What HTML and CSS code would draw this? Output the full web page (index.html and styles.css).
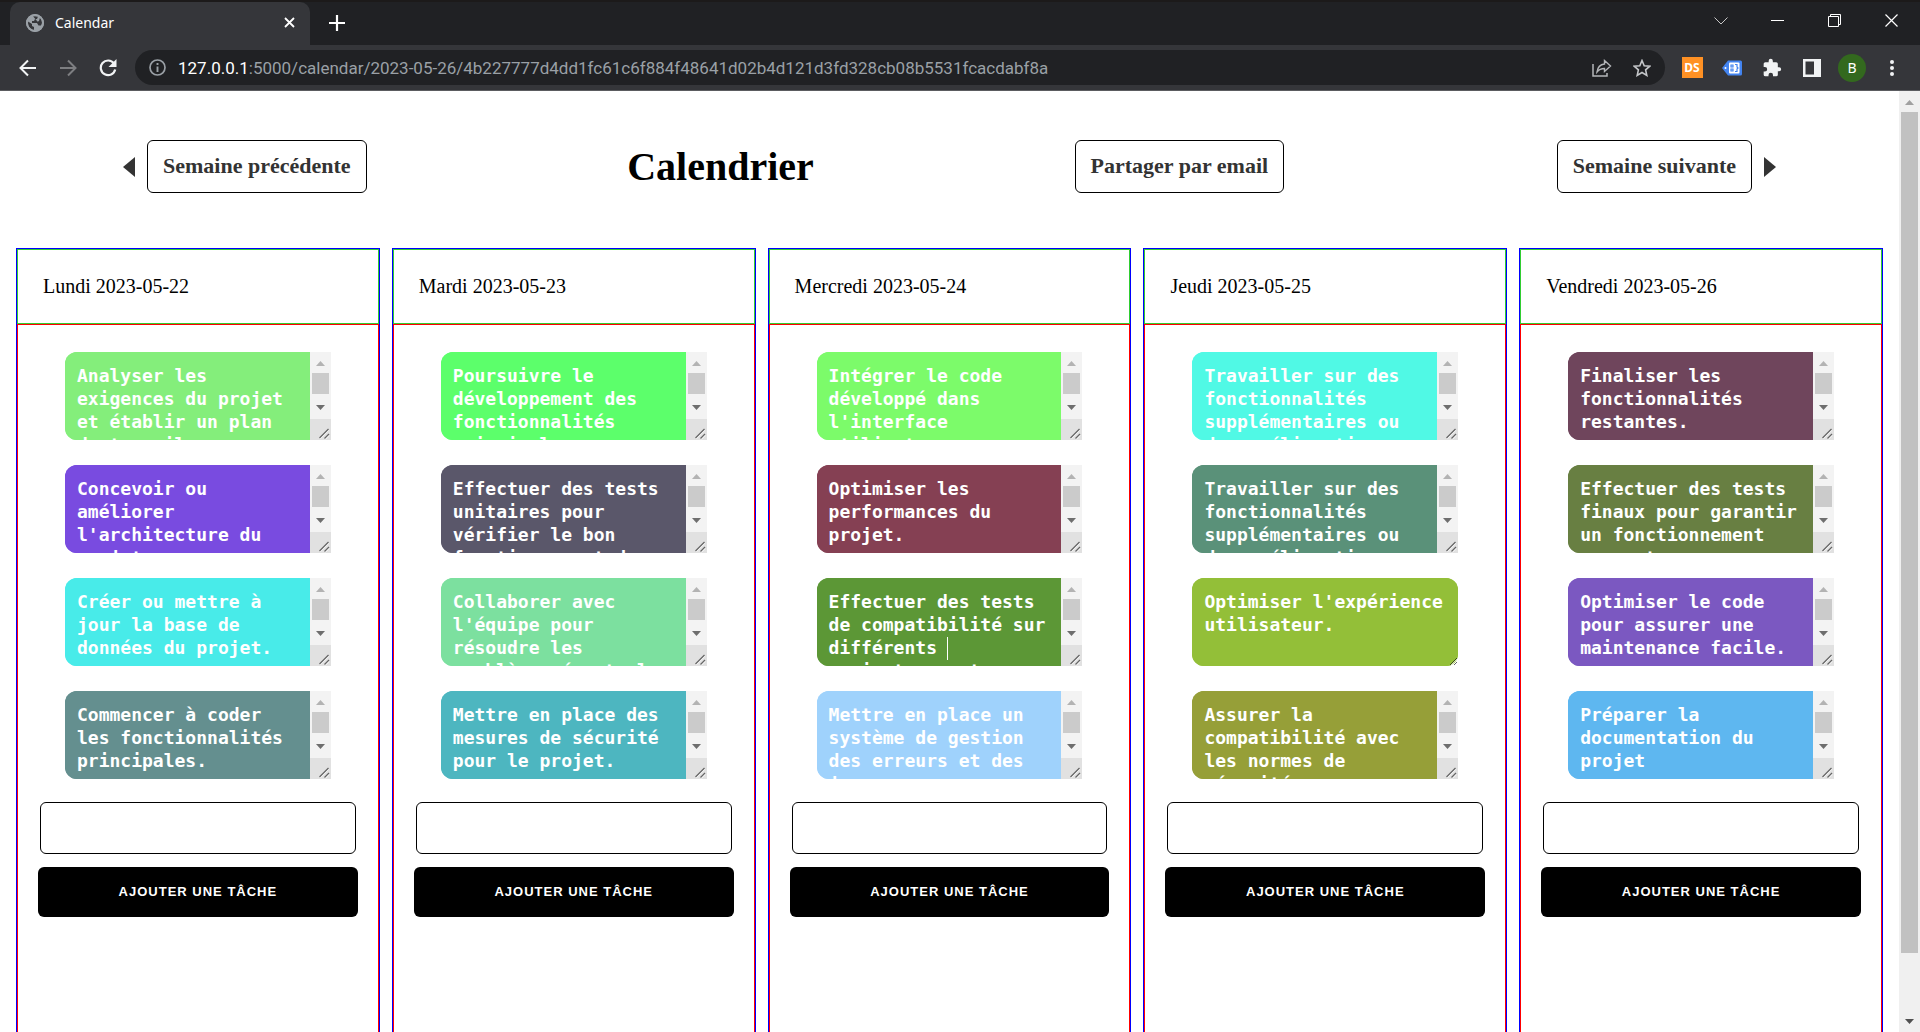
FILE: index.html
```html
<!DOCTYPE html>
<html lang="fr">
<head>
<meta charset="utf-8">
<title>Calendar</title>
<link rel="stylesheet" href="styles.css">
</head>
<body>
<svg class="defs" aria-hidden="true">
  <symbol id="bar" viewBox="0 0 21 88">
    <rect width="21" height="67" fill="#f3f3f3"/>
    <rect y="67" width="21" height="21" fill="#e1e1e1"/>
    <path d="M6 14h9L10.5 9z" fill="#b3b3b3"/>
    <rect x="2" y="21" width="17" height="21" fill="#cbcbcb"/>
    <path d="M6 53h9l-4.500 5z" fill="#6e6e6e"/>
    <path d="M10 86.500L18.500 78M15 87l4-4" stroke="#fff" stroke-width="1.500" fill="none"/>
    <path d="M9.500 86L18.500 77M14.500 86.500L19 82" stroke="#666" stroke-width="1.300" fill="none"/>
  </symbol>
</svg>

<header class="browser">
  <div class="tabs">
    <div class="tab">
      <svg width="18" height="18" viewBox="0 0 18 18"><circle cx="9" cy="9" r="9" fill="#9aa0a6"/><path d="M2 7.500l4 2.500v2l2 1v3C4 15.500 1.500 12 2 7.500zM7 2.200l5 .3-1 2.500H9L8 7H6v2h5l1.500 2.500H15c2-3 1-6-1-8l-1 3.500-2 1 1 1.500 2 1" fill="#35363a"/><circle cx="9" cy="9" r="8" fill="none" stroke="#9aa0a6" stroke-width="2"/></svg>
      <span class="tab-title">Calendar</span>
      <button class="plain" aria-label="Fermer l'onglet"><svg width="11" height="11" viewBox="0 0 11 11"><path d="M1 1l9 9M10 1l-9 9" stroke="#fff" stroke-width="1.800"/></svg></button>
    </div>
    <button class="plain new-tab" aria-label="Nouvel onglet"><svg width="16" height="16" viewBox="0 0 16 16"><path d="M8 0v16M0 8h16" stroke="#fff" stroke-width="2.200"/></svg></button>
    <div class="window-controls">
      <button class="plain" aria-label="Rechercher des onglets"><svg width="14" height="8" viewBox="0 0 14 8"><path d="M.5 .5L7 7l6.500-6.500" stroke="#c8c8c8" fill="none"/></svg></button>
      <button class="plain" aria-label="Réduire"><svg width="13" height="13" viewBox="0 0 13 13"><path d="M0 6.500h13" stroke="#fff"/></svg></button>
      <button class="plain" aria-label="Restaurer"><svg width="13" height="13" viewBox="0 0 13 13"><path d="M.5 2.500h10v10H.5zM2.500 2.500v-2h10v10h-2" stroke="#fff" fill="none"/></svg></button>
      <button class="plain" aria-label="Fermer"><svg width="13" height="13" viewBox="0 0 13 13"><path d="M.5 .5l12 12M12.500 .5l-12 12" stroke="#fff" stroke-width="1.200"/></svg></button>
    </div>
  </div>
  <div class="toolbar">
    <button class="plain tool" aria-label="Retour"><svg width="18" height="18" viewBox="0 0 18 18"><path d="M17 9H2M9 1.500L1.500 9 9 16.500" stroke="#f1f3f4" stroke-width="2" fill="none"/></svg></button>
    <button class="plain tool" aria-label="Avancer"><svg width="18" height="18" viewBox="0 0 18 18"><path d="M1 9h15M9 1.500L16.500 9 9 16.500" stroke="#7d7e81" stroke-width="2" fill="none"/></svg></button>
    <button class="plain tool" aria-label="Actualiser"><svg width="18" height="18" viewBox="0 0 18 18"><path d="M15 4.500A7.300 7.300 0 1 0 16.200 10.500" stroke="#f1f3f4" stroke-width="2.200" fill="none"/><path d="M17.500 0v8h-8z" fill="#f1f3f4"/></svg></button>
    <div class="omnibox">
      <svg class="info" width="17" height="17" viewBox="0 0 17 17"><circle cx="8.500" cy="8.500" r="7.500" fill="none" stroke="#9aa0a6" stroke-width="1.700"/><path d="M8.500 4v2M8.500 7.500v5.500" stroke="#9aa0a6" stroke-width="1.900"/></svg>
      <div class="url" role="textbox" aria-label="Adresse"><span class="host">127.0.0.1</span>:5000/calendar/2023-05-26/4b227777d4dd1fc61c6f884f48641d02b4d121d3fd328cb08b5531fcacdabf8a</div>
      <button class="plain tool" aria-label="Partager"><svg width="20" height="18" viewBox="0 0 20 18"><path d="M1 5v12h14v-3" stroke="#b4b6b9" stroke-width="1.500" fill="none"/><path d="M12.500 1.500L18.500 7l-6 5.500V9.500C9 9.500 7 10.500 5 13c.5-4 3-7.500 7.500-8z" stroke="#b4b6b9" stroke-width="1.400" fill="none"/></svg></button>
      <button class="plain tool" aria-label="Ajouter aux favoris"><svg width="18" height="18" viewBox="0 0 18 18"><path d="M9 1.500l2.200 5.200 5.600.5-4.200 3.700 1.200 5.500L9 13.500l-4.800 2.900 1.200-5.500L1.200 7.200l5.600-.5z" stroke="#c4c6c9" stroke-width="1.600" fill="none"/></svg></button>
    </div>
    <button class="plain tool"><span class="ds">DS</span></button>
    <button class="plain tool" aria-label="Extension"><svg width="20" height="16" viewBox="0 0 20 16"><path d="M6 .5h12.500q1.500 0 1.500 1.500v12q0 1.500-1.500 1.500H6L0 8z" fill="#4384f0"/><rect x="7" y="2.500" width="10.500" height="11" rx="1" fill="#fff"/><path d="M9 5h2v2H9zM9 9h2v2H9zM13 4.500h2V7l1 1-1 1v2.500h-2" fill="none" stroke="#4384f0" stroke-width="1.200"/><circle cx="3.500" cy="8" r="1" fill="#fff"/></svg></button>
    <button class="plain tool" aria-label="Extensions"><svg width="20" height="20" viewBox="0 0 24 24"><path d="M20.500 11H19V7a2 2 0 0 0-2-2h-4V3.500a2.500 2.500 0 0 0-5 0V5H4a2 2 0 0 0-2 2v3.800h1.500a2.700 2.700 0 0 1 0 5.400H2V20a2 2 0 0 0 2 2h3.800v-1.500a2.700 2.700 0 0 1 5.400 0V22H17a2 2 0 0 0 2-2v-4h1.500a2.500 2.500 0 0 0 0-5z" fill="#f1f3f4"/></svg></button>
    <button class="plain tool" aria-label="Panneau latéral"><svg width="18" height="18" viewBox="0 0 18 18"><path d="M0 0h18v18H0zM2.500 2.500v13H11v-13z" fill="#f1f3f4" fill-rule="evenodd"/></svg></button>
    <button class="plain tool"><span class="avatar">B</span></button>
    <button class="plain tool" aria-label="Menu"><svg width="4" height="16" viewBox="0 0 4 16"><circle cx="2" cy="2" r="2" fill="#f1f3f4"/><circle cx="2" cy="8" r="2" fill="#f1f3f4"/><circle cx="2" cy="14" r="2" fill="#f1f3f4"/></svg></button>
  </div>
</header>

<div class="viewport">
<main class="page">
  <nav class="week-nav">
    <div class="nav-group"><svg width="12" height="20" viewBox="0 0 12 20"><path d="M12 0v20L0 10z" fill="#333"/></svg><a class="box" href="#prev">Semaine précédente</a></div>
    <h1>Calendrier</h1>
    <a class="box" href="#share">Partager par email</a>
    <div class="nav-group next"><a class="box" href="#next">Semaine suivante</a><svg width="12" height="20" viewBox="0 0 12 20"><path d="M0 0v20l12-10z" fill="#333"/></svg></div>
  </nav>

  <div class="week">
    <section class="day">
      <h2>Lundi 2023-05-22</h2>
      <div class="day-body">
        <div class="tasks">
          <div class="task c1"><textarea aria-label="Tâche 1">Analyser les exigences du projet et établir un plan de travail.</textarea><svg class="bar"><use href="#bar"/></svg></div>
          <div class="task c2"><textarea aria-label="Tâche 2">Concevoir ou améliorer l'architecture du projet.</textarea><svg class="bar"><use href="#bar"/></svg></div>
          <div class="task c3"><textarea aria-label="Tâche 3">Créer ou mettre à jour la base de données du projet.</textarea><svg class="bar"><use href="#bar"/></svg></div>
          <div class="task c4"><textarea aria-label="Tâche 4">Commencer à coder les fonctionnalités principales.</textarea><svg class="bar"><use href="#bar"/></svg></div>
        </div>
        <input class="new-task" type="text" aria-label="Nouvelle tâche du lundi">
        <button class="add">AJOUTER UNE TÂCHE</button>
      </div>
    </section>
    <section class="day">
      <h2>Mardi 2023-05-23</h2>
      <div class="day-body">
        <div class="tasks">
          <div class="task c5"><textarea aria-label="Tâche 1">Poursuivre le développement des fonctionnalités principales.</textarea><svg class="bar"><use href="#bar"/></svg></div>
          <div class="task c6"><textarea aria-label="Tâche 2">Effectuer des tests unitaires pour vérifier le bon fonctionnement des modules.</textarea><svg class="bar"><use href="#bar"/></svg></div>
          <div class="task c7"><textarea aria-label="Tâche 3">Collaborer avec l'équipe pour résoudre les problèmes éventuels.</textarea><svg class="bar"><use href="#bar"/></svg></div>
          <div class="task c8"><textarea aria-label="Tâche 4">Mettre en place des mesures de sécurité pour le projet.</textarea><svg class="bar"><use href="#bar"/></svg></div>
        </div>
        <input class="new-task" type="text" aria-label="Nouvelle tâche du mardi">
        <button class="add">AJOUTER UNE TÂCHE</button>
      </div>
    </section>
    <section class="day">
      <h2>Mercredi 2023-05-24</h2>
      <div class="day-body">
        <div class="tasks">
          <div class="task c9"><textarea aria-label="Tâche 1">Intégrer le code développé dans l'interface utilisateur.</textarea><svg class="bar"><use href="#bar"/></svg></div>
          <div class="task c10"><textarea aria-label="Tâche 2">Optimiser les performances du projet.</textarea><svg class="bar"><use href="#bar"/></svg></div>
          <div class="task c11"><textarea aria-label="Tâche 3">Effectuer des tests de compatibilité sur différents 
navigateurs et appareils.</textarea><span class="caret"></span><svg class="bar"><use href="#bar"/></svg></div>
          <div class="task c12"><textarea aria-label="Tâche 4">Mettre en place un système de gestion des erreurs et des journaux.</textarea><svg class="bar"><use href="#bar"/></svg></div>
        </div>
        <input class="new-task" type="text" aria-label="Nouvelle tâche du mercredi">
        <button class="add">AJOUTER UNE TÂCHE</button>
      </div>
    </section>
    <section class="day">
      <h2>Jeudi 2023-05-25</h2>
      <div class="day-body">
        <div class="tasks">
          <div class="task c13"><textarea aria-label="Tâche 1">Travailler sur des fonctionnalités supplémentaires ou des améliorations.</textarea><svg class="bar"><use href="#bar"/></svg></div>
          <div class="task c14"><textarea aria-label="Tâche 2">Travailler sur des fonctionnalités supplémentaires ou des améliorations.</textarea><svg class="bar"><use href="#bar"/></svg></div>
          <div class="task short c15"><textarea aria-label="Tâche 3">Optimiser l'expérience utilisateur.</textarea></div>
          <div class="task c16"><textarea aria-label="Tâche 4">Assurer la compatibilité avec les normes de sécurité.</textarea><svg class="bar"><use href="#bar"/></svg></div>
        </div>
        <input class="new-task" type="text" aria-label="Nouvelle tâche du jeudi">
        <button class="add">AJOUTER UNE TÂCHE</button>
      </div>
    </section>
    <section class="day">
      <h2>Vendredi 2023-05-26</h2>
      <div class="day-body">
        <div class="tasks">
          <div class="task c17"><textarea aria-label="Tâche 1">Finaliser les fonctionnalités restantes.</textarea><svg class="bar"><use href="#bar"/></svg></div>
          <div class="task c18"><textarea aria-label="Tâche 2">Effectuer des tests finaux pour garantir un fonctionnement correct.</textarea><svg class="bar"><use href="#bar"/></svg></div>
          <div class="task c19"><textarea aria-label="Tâche 3">Optimiser le code pour assurer une maintenance facile.</textarea><svg class="bar"><use href="#bar"/></svg></div>
          <div class="task c20"><textarea aria-label="Tâche 4">Préparer la documentation du projet</textarea><svg class="bar"><use href="#bar"/></svg></div>
        </div>
        <input class="new-task" type="text" aria-label="Nouvelle tâche du vendredi">
        <button class="add">AJOUTER UNE TÂCHE</button>
      </div>
    </section>
  </div>
</main>
<div class="page-scroll" aria-hidden="true">
  <svg width="21" height="21" viewBox="0 0 21 21"><path d="M6 14h9l-4.500-5z" fill="#a0a0a0"/></svg>
  <div class="track"><div class="thumb"></div></div>
  <svg width="21" height="21" viewBox="0 0 21 21"><path d="M6 8h9l-4.500 5z" fill="#505050"/></svg>
</div>
</div>
</body>
</html>
```
FILE: styles.css
```css
* { box-sizing: border-box; }

body {
  margin: 0;
  height: 100vh;
  display: flex;
  flex-direction: column;
  overflow: hidden;
  background: #fff;
  font-family: "Liberation Serif", "Times New Roman", serif;
  font-size: 20px;
  color: #000;
}

svg { display: block; flex: none; }
.defs { position: absolute; width: 0; height: 0; }

/* browser frame */
.browser {
  flex: none;
  background: #202124;
  font-family: "Noto Sans", "Open Sans", sans-serif;
  color: #fff;
}
.tabs {
  height: 45px;
  display: flex;
  align-items: stretch;
  padding-left: 10px;
  border-top: 2px solid #1c1a1a;
}
.tab {
  width: 300px;
  display: flex;
  align-items: center;
  padding: 0 15px 2px 16px;
  background: #35363a;
  border-radius: 10px 10px 0 0;
}
.tab-title { flex: 1; margin-left: 11px; font-size: 14px; }
.plain {
  display: flex;
  align-items: center;
  justify-content: center;
  border: 0;
  padding: 0;
  background: none;
  color: inherit;
  font-family: inherit;
}
.new-tab { width: 54px; padding-bottom: 2px; }
.window-controls { margin-left: auto; display: flex; }
.window-controls .plain { width: 57px; padding-bottom: 6px; }

.toolbar {
  height: 46px;
  display: flex;
  align-items: center;
  padding: 0 8px;
  background: #35363a;
  border-bottom: 1px solid #5b5c60;
}
.tool { width: 40px; height: 34px; }
.omnibox {
  flex: 1;
  height: 35px;
  min-width: 0;
  display: flex;
  align-items: center;
  margin: 0 7px;
  padding: 0 3px 0 14px;
  border-radius: 18px;
  background: #202124;
}
.url {
  flex: 1;
  min-width: 0;
  margin-left: 12px;
  overflow: hidden;
  white-space: nowrap;
  font-family: Roboto, "Noto Sans", sans-serif;
  font-size: 17px;
  color: #9aa0a6;
}
.host { color: #fff; }
.ds {
  width: 21px;
  height: 21px;
  background: #ff9124;
  font-size: 12px;
  font-weight: 700;
  line-height: 21px;
}
.avatar {
  width: 28px;
  height: 28px;
  border-radius: 50%;
  background: #33691e;
  font-size: 14px;
  line-height: 28px;
}

/* page */
.viewport { flex: 1; min-height: 0; display: flex; }
.page {
  flex: 1;
  min-width: 0;
  display: flex;
  flex-direction: column;
  overflow: hidden;
}
.week-nav {
  display: flex;
  justify-content: space-between;
  align-items: center;
  padding: 49px 123px 55px;
}
.nav-group { display: flex; align-items: center; gap: 12px; }
.nav-group.next { padding-left: 12px; }
.box {
  padding: 0 15px 2px;
  border: 1px solid #000;
  border-radius: 6px;
  font-size: 22px;
  font-weight: 700;
  line-height: 49px;
  color: #333;
  text-decoration: none;
  white-space: nowrap;
}
h1 { margin: 0; font-size: 40px; line-height: 53px; }

.week {
  flex: 1;
  display: grid;
  grid-template-columns: repeat(5, 1fr);
  gap: 12px;
  padding: 0 16px;
}
.day {
  display: flex;
  flex-direction: column;
  border: 1px solid #00f;
  border-bottom: 0;
}
.day h2 {
  margin: 0;
  padding: 0 25px;
  border: 1px solid #32cd32;
  font-size: 20px;
  font-weight: 400;
  line-height: 73px;
}
.day-body {
  flex: 1;
  display: flex;
  flex-direction: column;
  padding: 27px 20px 0;
  border: 1px solid #f00;
  border-bottom: 0;
}
.tasks {
  display: flex;
  flex-direction: column;
  gap: 25px;
  padding: 0 27px;
}
.task {
  position: relative;
  display: flex;
  height: 88px;
  border-radius: 12px 0 0 12px;
}
.task textarea {
  flex: 1;
  min-width: 0;
  margin: 0;
  padding: 12px;
  border: 0;
  border-radius: 12px 0 0 12px;
  outline: 0;
  resize: none;
  overflow: hidden;
  background: inherit;
  color: #fff;
  font-family: "DejaVu Sans Mono", monospace;
  font-size: 18px;
  font-weight: 700;
  line-height: 23px;
}
.task.short, .task.short textarea { border-radius: 12px; }
.task.short textarea { resize: both; }
.bar { width: 21px; height: 88px; }
.caret {
  position: absolute;
  left: 130px;
  top: 59px;
  width: 1px;
  height: 23px;
  background: #fff;
}
.new-task {
  height: 52px;
  margin: 23px 2px 13px;
  padding: 0 12px;
  border: 1px solid #000;
  border-radius: 6px;
  font-size: 18px;
}
.add {
  height: 50px;
  padding: 0 0 2px;
  border: 0;
  border-radius: 6px;
  background: #000;
  color: #fff;
  font-family: "Liberation Sans", Arial, sans-serif;
  font-size: 13px;
  font-weight: 700;
  letter-spacing: 1px;
}

.c1 { background: #84ee7b; }
.c2 { background: #794be0; }
.c3 { background: #48ebe9; }
.c4 { background: #648f8f; }
.c5 { background: #5cff6b; }
.c6 { background: #5a576a; }
.c7 { background: #7ce09f; }
.c8 { background: #4db6c0; }
.c9 { background: #7cfb6a; }
.c10 { background: #854053; }
.c11 { background: #5c9736; }
.c12 { background: #9fd2fc; }
.c13 { background: #50f9e5; }
.c14 { background: #5a9179; }
.c15 { background: #93bf38; }
.c16 { background: #969f38; }
.c17 { background: #6f455c; }
.c18 { background: #687f42; }
.c19 { background: #7b58c1; }
.c20 { background: #5eb7f0; }

.page-scroll {
  flex: none;
  width: 21px;
  display: flex;
  flex-direction: column;
  background: #f0f0f0;
}
.track { flex: 1; display: flex; padding: 0 2px 58px; }
.thumb { flex: 1; background: #c1c1c1; }
```
